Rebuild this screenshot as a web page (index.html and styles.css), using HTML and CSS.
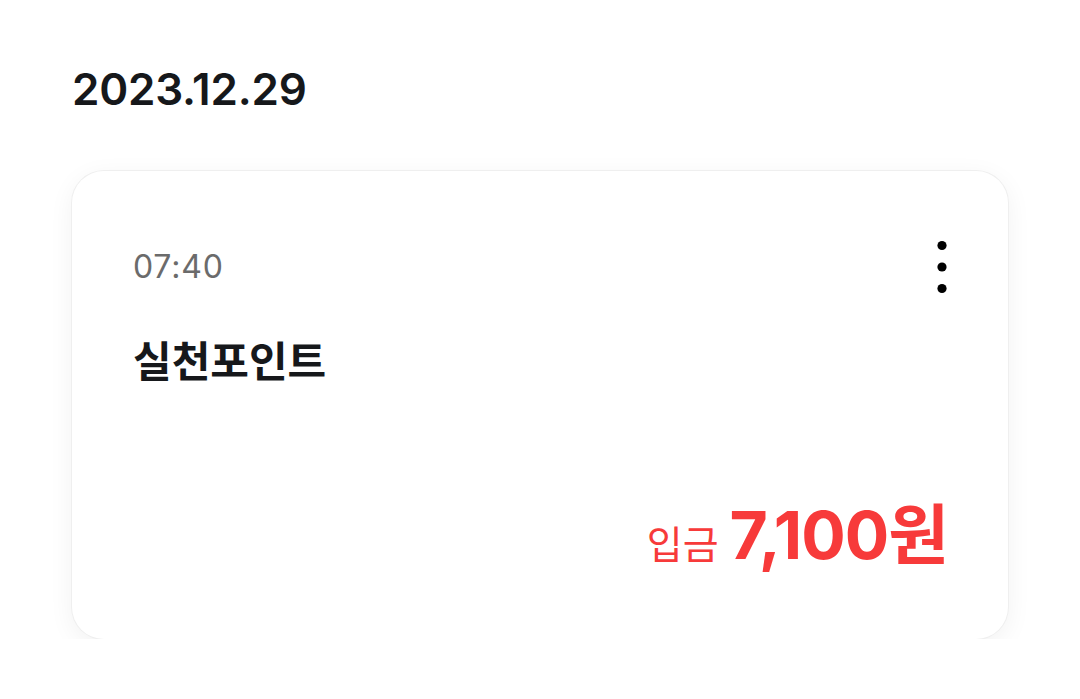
FILE: index.html
```html
<!DOCTYPE html>
<html lang="ko">
<head>
<meta charset="utf-8">
<link rel="stylesheet" href="styles.css">
</head>
<body>
<main class="page">
  <h2 class="date">2023.12.29</h2>
  <section class="card">
    <div class="card-head">
      <span class="time">07:40</span>
      <button class="more" aria-label="더보기">
        <svg width="12" height="56" viewBox="0 0 12 56">
          <circle cx="6" cy="6.5" r="4.6" fill="#000"/>
          <circle cx="6" cy="28" r="4.6" fill="#000"/>
          <circle cx="6" cy="49.5" r="4.6" fill="#000"/>
        </svg>
      </button>
    </div>
    <div class="title">실천포인트</div>
    <div class="amount">
      <span class="label">입금</span>
      <span class="value">7,100원</span>
    </div>
  </section>
</main>
</body>
</html>
```

FILE: styles.css
```css
* { box-sizing: border-box; }
html, body { margin: 0; padding: 0; background: #fff; }
body {
  font-family: Inter, "Noto Sans CJK KR", sans-serif;
  color: #15171a;
}
.page {
  padding: 63px 72px 0 72px;
}
.date {
  margin: 0 0 56px 0;
  font-size: 44px;
  line-height: 52px;
  font-weight: 600;
  letter-spacing: -0.2px;
  color: #16181b;
}
.card {
  border-radius: 32px;
  background: #fff;
  box-shadow: 0 0 0 1px #efefef, 0 6px 26px rgba(0,0,0,0.06);
  padding: 77px 60px 0 61px;
  height: 468px;
  display: flex;
  flex-direction: column;
}
.card-head {
  display: flex;
  justify-content: space-between;
  align-items: flex-start;
}
.time {
  font-size: 32px;
  line-height: 38px;
  letter-spacing: 0.8px;
  color: #6b6b6b;
  font-weight: 400;
}
.more {
  border: 0;
  background: none;
  padding: 0;
  margin: -9px 0 0 0;
  display: flex;
}
.title {
  margin-top: 41px;
  font-size: 42px;
  line-height: 52px;
  font-weight: 600;
  color: #16181b;
}
.amount {
  margin-top: auto;
  margin-bottom: 66px;
  display: flex;
  justify-content: flex-end;
  align-items: baseline;
  gap: 11px;
  color: #f73a3a;
}
.label {
  font-size: 39px;
  font-weight: 400;
}
.value {
  font-size: 66px;
  font-weight: 700;
  letter-spacing: -1px;
  line-height: 76px;
}
```
